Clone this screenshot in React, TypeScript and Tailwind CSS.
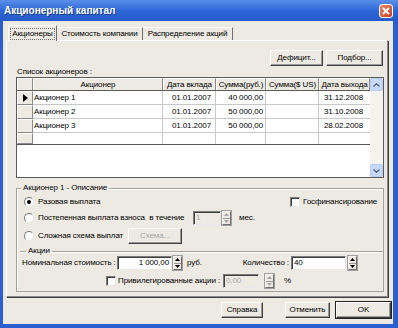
import React from "react";

const font = "font-['Liberation_Sans',sans-serif]";

const rows = [
  { name: "Акционер 1", date: "01.01.2007", rub: "40 000,00", usd: "", out: "31.12.2008" },
  { name: "Акционер 2", date: "01.01.2007", rub: "50 000,00", usd: "", out: "31.10.2008" },
  { name: "Акционер 3", date: "01.01.2007", rub: "50 000,00", usd: "", out: "28.02.2008" },
];

function Spin({ disabled }: { disabled?: boolean }) {
  const c = disabled ? "#A7A6AA" : "#000";
  return (
    <div className="flex h-[14px] w-[9px] flex-col border border-t-[#F4F4F4] border-l-[#F4F4F4] border-r-[#6F6F6F] border-b-[#6F6F6F] bg-[#ECEAE2] shadow-[0_0_0_1px_#A0A0A0]">
      <div className="flex flex-1 items-center justify-center border-b border-[#9A9A9A]">
        <svg width="5" height="3" viewBox="0 0 5 3">
          <path d="M2.5 0L5 3H0z" fill={c} />
        </svg>
      </div>
      <div className="flex flex-1 items-center justify-center">
        <svg width="5" height="3" viewBox="0 0 5 3">
          <path d="M0 0H5L2.5 3z" fill={c} />
        </svg>
      </div>
    </div>
  );
}

function Radio({ checked }: { checked?: boolean }) {
  return (
    <div className="flex h-[10px] w-[10px] items-center justify-center rounded-full border border-t-[#7A7A7A] border-l-[#7A7A7A] border-r-[#E8E8E8] border-b-[#E8E8E8] bg-white">
      {checked && <div className="h-[4px] w-[4px] rounded-full bg-black" />}
    </div>
  );
}

function Check() {
  return (
    <div className="h-[10px] w-[10px] border border-t-[#7A7A7A] border-l-[#7A7A7A] border-r-[#E8E8E8] border-b-[#E8E8E8] bg-white shadow-[inset_1px_1px_0_#404040]" />
  );
}

function Btn({ w, children, def, disabled }: { w: string; children: React.ReactNode; def?: boolean; disabled?: boolean }) {
  return (
    <div
      className={`${w} flex h-[16px] items-center justify-center border border-t-white border-l-white border-r-[#404040] border-b-[#404040] bg-[#ECEAE2] shadow-[inset_-1px_-1px_0_#9A9A9A] ${def ? "outline outline-1 outline-[#202020]" : ""} ${disabled ? "text-[#A7A6AA]" : "text-black"}`}
    >
      {children}
    </div>
  );
}

function Input({ w, value, disabled, right }: { w: string; value: string; disabled?: boolean; right?: boolean }) {
  return (
    <div
      className={`${w} flex h-[14px] items-center border border-t-[#7A7A7A] border-l-[#7A7A7A] border-r-[#E8E8E8] border-b-[#E8E8E8] px-[2px] shadow-[inset_1px_1px_0_#404040] ${right ? "justify-end" : ""} ${disabled ? "bg-[#ECEAE2] text-[#A7A6AA]" : "bg-white text-black"}`}
    >
      {value}
    </div>
  );
}

function HeadCell({ w, children }: { w: string; children?: React.ReactNode }) {
  return (
    <div className={`${w} flex h-full items-center justify-center border-r border-t border-l border-t-white border-l-white border-r-[#8A8A8A] bg-[#ECEAE2]`}>
      {children}
    </div>
  );
}

function Indicator({ arrow }: { arrow?: boolean }) {
  return (
    <div className="flex h-full w-[16px] items-center justify-center border border-t-white border-l-white border-r-[#8A8A8A] border-b-[#8A8A8A] bg-[#ECEAE2]">
      {arrow && (
        <svg width="5" height="8" viewBox="0 0 5 8">
          <path d="M0 0L5 4L0 8z" fill="#000" />
        </svg>
      )}
    </div>
  );
}

export default function App() {
  return (
    <div className={`${font} flex h-[328px] w-[398px] flex-col whitespace-nowrap bg-[#2B5FD0] text-[8px] leading-none tracking-[-0.1px] text-black`}>
      {/* Title bar */}
      <div className="flex h-[21px] items-center justify-between bg-gradient-to-b from-[#5B8FEA] via-[#2E67D8] to-[#2559C8] pl-[4px] pr-[5px]">
        <span className="text-[10px] font-bold tracking-normal text-white [text-shadow:1px_1px_0_#1A3C8A]">
          Акционерный капитал
        </span>
        <div className="flex h-[14px] w-[14px] items-center justify-center rounded-[3px] border border-white bg-gradient-to-br from-[#E8896A] to-[#C33E1C]">
          <svg width="8" height="8" viewBox="0 0 8 8">
            <path d="M1 1L7 7M7 1L1 7" stroke="white" strokeWidth="1.8" />
          </svg>
        </div>
      </div>

      {/* Body */}
      <div className="mb-[4px] ml-[3px] mr-[5px] flex flex-1 flex-col bg-[#ECEAE2] pt-[4px]">
        {/* Tabs */}
        <div className="ml-[5px] flex h-[15px] items-end">
          <div className="relative z-10 -mb-px flex h-[16px] w-[49px] items-center justify-center border border-b-0 border-t-white border-l-white border-r-[#6F6F6F] bg-[#ECEAE2]">
            <div className="border border-dotted border-[#707070] px-[1px] py-[1px]">Акционеры</div>
          </div>
          <div className="flex h-[13px] w-[86px] items-center justify-center border-r border-t border-t-white border-r-[#6F6F6F]">
            Стоимость компании
          </div>
          <div className="flex h-[13px] w-[90px] items-center justify-center border-r border-t border-t-white border-r-[#6F6F6F]">
            Распределение акций
          </div>
        </div>

        {/* Panel */}
        <div className="ml-[3px] flex h-[257px] w-[382px] flex-col border border-t-white border-l-white border-r-[#8A8A8A] border-b-[#8A8A8A] shadow-[1px_1px_0_#404040]">
          <div className="mt-[9px] flex justify-end gap-[3px] pr-[4px]">
            <Btn w="w-[53px]">Дефицит...</Btn>
            <Btn w="w-[57px]">Подбор...</Btn>
          </div>
          <div className="ml-[10px] mt-[1px] h-[9px] leading-[9px]">Список акционеров :</div>

          {/* Table */}
          <div className="ml-[9px] mt-[1px] flex h-[101px] w-[368px] border border-[#5A5A5A] bg-white">
            <div className="flex flex-1 flex-col">
              <div className="flex h-[13px] border-b border-[#5A5A5A]">
                <HeadCell w="w-[16px]" />
                <HeadCell w="w-[130px]">Акционер</HeadCell>
                <HeadCell w="w-[53px]">Дата вклада</HeadCell>
                <HeadCell w="w-[50px]">Сумма(руб.)</HeadCell>
                <HeadCell w="w-[53px]">Сумма($ US)</HeadCell>
                <HeadCell w="w-[51px]">Дата выхода</HeadCell>
              </div>
              {rows.map((r, i) => (
                <div key={r.name} className="flex h-[14px]">
                  <Indicator arrow={i === 0} />
                  <div className="flex w-[130px] items-center border-b border-r border-[#C8C8C8] pl-[1px]">{r.name}</div>
                  <div className="flex w-[53px] items-center justify-end border-b border-r border-[#C8C8C8] pr-[4px]">{r.date}</div>
                  <div className="flex w-[50px] items-center justify-end border-b border-r border-[#C8C8C8] pr-[2px]">{r.rub}</div>
                  <div className="flex w-[53px] items-center justify-end border-b border-r border-[#C8C8C8] pr-[2px]">{r.usd}</div>
                  <div className="flex w-[51px] items-center justify-end border-b border-[#C8C8C8] pr-[7px]">{r.out}</div>
                </div>
              ))}
              <div className="flex h-[12px] border-b border-[#5A5A5A]">
                <Indicator />
                <div className="w-[130px] border-r border-[#C8C8C8]" />
                <div className="w-[53px] border-r border-[#C8C8C8]" />
                <div className="w-[50px] border-r border-[#C8C8C8]" />
                <div className="w-[53px] border-r border-[#C8C8C8]" />
                <div className="w-[51px]" />
              </div>
            </div>
            {/* Scrollbar */}
            <div className="flex w-[13px] flex-col justify-between bg-[#F4F3EE]">
              <div className="flex h-[13px] items-center justify-center rounded-[2px] border border-[#B9CCF5] bg-[#C8D8FA]">
                <svg width="7" height="4" viewBox="0 0 7 4">
                  <path d="M0.5 3.5L3.5 0.8L6.5 3.5" stroke="#4D6185" strokeWidth="1.3" fill="none" />
                </svg>
              </div>
              <div className="flex h-[13px] items-center justify-center rounded-[2px] border border-[#B9CCF5] bg-[#C8D8FA]">
                <svg width="7" height="4" viewBox="0 0 7 4">
                  <path d="M0.5 0.5L3.5 3.2L6.5 0.5" stroke="#4D6185" strokeWidth="1.3" fill="none" />
                </svg>
              </div>
            </div>
          </div>

          {/* Group box */}
          <fieldset className="ml-[9px] mt-[5px] h-[109px] w-[368px] border border-[#A3A397] pb-0 shadow-[inset_1px_1px_0_white]">
            <legend className="ml-[4px] px-[2px] leading-[10px]">Акционер 1 - Описание</legend>
            <div className="mt-[1px] flex h-[16px] items-center pl-[7px]">
              <div className="flex w-[266px] items-center gap-[4px]">
                <Radio checked />
                <span>Разовая выплата</span>
              </div>
              <div className="flex items-center gap-[3px]">
                <Check />
                <span>Госфинансирование</span>
              </div>
            </div>
            <div className="flex h-[16px] items-center pl-[7px]">
              <div className="flex w-[169px] items-center gap-[4px]">
                <Radio />
                <span>Постепенная выплата взноса&nbsp; в течение</span>
              </div>
              <Input w="w-[28px]" value="1" disabled />
              <div className="ml-[1px]">
                <Spin disabled />
              </div>
              <span className="ml-[8px]">мес.</span>
            </div>
            <div className="mt-[2px] flex h-[16px] items-center pl-[7px]">
              <div className="flex w-[104px] items-center gap-[4px]">
                <Radio />
                <span>Сложная схема выплат</span>
              </div>
              <Btn w="w-[54px]" disabled>
                Схема...
              </Btn>
            </div>

            <fieldset className="ml-[3px] mt-[2px] w-[363px] border-0 border-t border-[#A3A397] shadow-[inset_0_1px_0_white]">
              <legend className="ml-[6px] px-[2px] leading-[10px]">Акции</legend>
              <div className="flex h-[14px] items-center">
                <div className="w-[97px] pl-[2px]">Номинальная стоимость :</div>
                <Input w="w-[55px]" value="1 000,00" right />
                <div className="ml-[1px]">
                  <Spin />
                </div>
                <span className="w-[24px] pl-[5px]">руб.</span>
                <div className="w-[85px] pr-[2px] text-right">Количество :</div>
                <Input w="w-[55px]" value="40" />
                <div className="ml-[2px]">
                  <Spin />
                </div>
              </div>
              <div className="mt-[4px] flex h-[14px] items-center pl-[86px]">
                <Check />
                <span className="ml-[2px] w-[105px]">Привилегированные акции :</span>
                <Input w="w-[36px]" value="0,00" disabled />
                <div className="ml-[6px]">
                  <Spin disabled />
                </div>
                <span className="ml-[10px]">%</span>
              </div>
            </fieldset>
          </fieldset>
        </div>

        {/* Dialog buttons */}
        <div className="mt-[5px] flex justify-end pr-[2px]">
          <Btn w="w-[42px]">Справка</Btn>
          <div className="ml-[22px]">
            <Btn w="w-[45px]">Отменить</Btn>
          </div>
          <div className="ml-[6px]">
            <Btn w="w-[55px]" def>
              OK
            </Btn>
          </div>
        </div>
      </div>
    </div>
  );
}
